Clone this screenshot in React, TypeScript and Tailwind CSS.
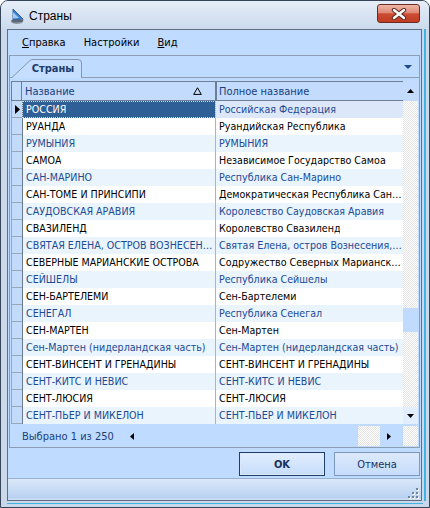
import React from 'react';

type Row = { name: string; full: string };

const rows: Row[] = [
  { name: 'РОССИЯ', full: 'Российская Федерация' },
  { name: 'РУАНДА', full: 'Руандийская Республика' },
  { name: 'РУМЫНИЯ', full: 'РУМЫНИЯ' },
  { name: 'САМОА', full: 'Независимое Государство Самоа' },
  { name: 'САН-МАРИНО', full: 'Республика Сан-Марино' },
  { name: 'САН-ТОМЕ И ПРИНСИПИ', full: 'Демократическая Республика Сан-Томе и Принсипи' },
  { name: 'САУДОВСКАЯ АРАВИЯ', full: 'Королевство Саудовская Аравия' },
  { name: 'СВАЗИЛЕНД', full: 'Королевство Свазиленд' },
  { name: 'СВЯТАЯ ЕЛЕНА, ОСТРОВ ВОЗНЕСЕНИЯ, ТРИСТАН-ДА-КУНЬЯ', full: 'Святая Елена, остров Вознесения, Тристан-да-Кунья' },
  { name: 'СЕВЕРНЫЕ МАРИАНСКИЕ ОСТРОВА', full: 'Содружество Северных Марианских островов' },
  { name: 'СЕЙШЕЛЫ', full: 'Республика Сейшелы' },
  { name: 'СЕН-БАРТЕЛЕМИ', full: 'Сен-Бартелеми' },
  { name: 'СЕНЕГАЛ', full: 'Республика Сенегал' },
  { name: 'СЕН-МАРТЕН', full: 'Сен-Мартен' },
  { name: 'Сен-Мартен (нидерландская часть)', full: 'Сен-Мартен (нидерландская часть)' },
  { name: 'СЕНТ-ВИНСЕНТ И ГРЕНАДИНЫ', full: 'СЕНТ-ВИНСЕНТ И ГРЕНАДИНЫ' },
  { name: 'СЕНТ-КИТС И НЕВИС', full: 'СЕНТ-КИТС И НЕВИС' },
  { name: 'СЕНТ-ЛЮСИЯ', full: 'СЕНТ-ЛЮСИЯ' },
  { name: 'СЕНТ-ПЬЕР И МИКЕЛОН', full: 'СЕНТ-ПЬЕР И МИКЕЛОН' },
];

function AppIcon() {
  return (
    <svg width="15" height="17" viewBox="0 0 15 17">
      <ellipse cx="7" cy="13.5" rx="6" ry="2.5" fill="#8d96a3" />
      <path d="M3 1 L13 11 L3 12 Z" fill="#3b7fd0" stroke="#1c4f95" strokeWidth="0.8" />
      <path d="M3 4 L9 10 L3 10.5 Z" fill="#9fc8f2" />
      <path d="M1 12 L14 11.5 L12 14 L3 14.5 Z" fill="#5d6673" />
    </svg>
  );
}

function CloseButton() {
  return (
    <div className="w-[43px] h-[19px] mt-[3px] self-start rounded-[3px] border border-[#6b2a1f] bg-[linear-gradient(#eeb6a8_0%,#e08a76_45%,#cc4c34_52%,#c23d24_100%)] flex items-center justify-center">
      <svg width="16" height="12" viewBox="0 0 16 12">
        <path d="M3 2 L13 10 M13 2 L3 10" stroke="#5b2a22" strokeWidth="4.4" strokeLinecap="round" />
        <path d="M3 2 L13 10 M13 2 L3 10" stroke="#ffffff" strokeWidth="2.4" strokeLinecap="round" />
      </svg>
    </div>
  );
}

function Tri({ dir, color = '#000', w = 7, h = 4 }: { dir: 'up' | 'down' | 'left' | 'right'; color?: string; w?: number; h?: number }) {
  const pts = {
    up: `0,${h} ${w / 2},0 ${w},${h}`,
    down: `0,0 ${w},0 ${w / 2},${h}`,
    left: `${w},0 ${w},${h} 0,${h / 2}`,
    right: `0,0 0,${h} ${w},${h / 2}`,
  }[dir];
  return (
    <svg width={w} height={h} viewBox={`0 0 ${w} ${h}`}>
      <polygon points={pts} fill={color} />
    </svg>
  );
}

const checker =
  'bg-[repeating-conic-gradient(#ffffff_0%_25%,#e3e3e3_0%_50%)] bg-[length:2px_2px]';

function GridRow({ row, index }: { row: Row; index: number }) {
  const alt = index % 2 === 0;
  const selected = index === 0;
  const text = alt ? 'text-[#1c4a94]' : 'text-black';
  const bg = alt ? 'bg-[#e9f4fd]' : 'bg-white';
  return (
    <div className="flex h-[17px]">
      <div className="w-[11px] border-l border-b border-[#98a7ba] bg-[#c2dbfa] flex items-center justify-center">
        {selected && <Tri dir="right" w={5} h={9} />}
      </div>
      <div
        className={`w-[194px] border-l border-l-[#6b7b8f] border-r border-r-[#a9b4c2] flex items-center pl-[3px] overflow-hidden ${
          selected ? 'bg-[#2f5f97] text-white outline-1 outline-dotted outline-[#d0dcea] -outline-offset-1' : `${bg} ${text}`
        }`}
      >
        <span className="truncate">{row.name}</span>
      </div>
      <div
        className={`w-[187px] flex items-center pl-[3px] overflow-hidden ${selected ? 'bg-[#dce8fa] text-[#1c4a94]' : `${bg} ${text}`}`}
      >
        <span className="truncate">{row.full}</span>
      </div>
    </div>
  );
}

export default function App() {
  return (
    <div className="w-[430px] h-[508px] flex flex-col bg-[#cad8ea] border border-[#36445a] rounded-t-[8px] overflow-hidden font-['DejaVu_Sans_Condensed','Liberation_Sans',Arial,sans-serif] text-[10.6px] leading-[13px] select-none">
      {/* title bar */}
      <div className="h-[28px] shrink-0 flex items-start pl-[9px] pr-[9px] bg-[linear-gradient(#e6eef8,#cbdaec)]">
        <div className="mt-[7px]">
          <AppIcon />
        </div>
        <span className="ml-[4px] mt-[8px] font-['Liberation_Sans',Arial,sans-serif] text-[12px] leading-[14px] text-black">Страны</span>
        <div className="ml-auto">
          <CloseButton />
        </div>
      </div>

      <div className="flex-1 flex pl-[6px] min-h-0">
        {/* client */}
        <div className="w-[415px] flex flex-col border border-[#5f6e82] bg-[#bfdbff]">
          {/* menu */}
          <div className="h-[25px] shrink-0 flex items-center gap-[18px] pl-[14px] text-[11px] text-black">
            <span>
              <span className="underline">С</span>правка
            </span>
            <span>Настройки</span>
            <span>
              <span className="underline">В</span>ид
            </span>
          </div>

          {/* tab + grid panel */}
          <div className="mx-[1px] flex flex-col border border-[#8d9db3]">
            <div className="h-[22px] shrink-0 flex items-end border-b border-[#8d9db3] pr-[7px]">
              <div className="relative w-[72px] h-[19px] ml-[1px] -mb-[1px] flex items-center justify-center pl-[18px] pr-[6px]">
                <svg className="absolute inset-0" width="72" height="19" viewBox="0 0 72 19">
                  <path d="M0.5 19 L19 1.5 Q20 0.5 22 0.5 L67 0.5 Q70.5 0.5 70.5 4 L70.5 19" fill="#c6deff" stroke="#8596ad" />
                </svg>
                <span className="relative font-bold text-[11px] text-[#1e3b6b]">Страны</span>
              </div>
              <div className="ml-auto mb-[8px]">
                <Tri dir="down" color="#1e4a8c" w={8} h={4} />
              </div>
            </div>

            {/* grid */}
            <div className="pt-[3px] px-[1px] bg-[#bfdbff]">
              <div className="flex">
                <div className="flex flex-col">
                  {/* header */}
                  <div className="flex h-[20px] text-[11px]">
                    <div className="w-[11px] border border-[#6f7f93] bg-[#c4dcfb]" />
                    <div className="w-[194px] border-t border-b border-r border-[#6f7f93] bg-[#c3dbfd] flex items-center pl-[3px] pr-[13px] text-[#16407e]">
                      <span>Название</span>
                      <svg className="ml-auto" width="9" height="8" viewBox="0 0 9 8">
                        <path d="M4.5 0.8 L8.3 7.4 L0.7 7.4 Z" fill="none" stroke="#000" strokeWidth="1" />
                      </svg>
                    </div>
                    <div className="w-[187px] border-t border-b border-l border-[#6f7f93] bg-[#c3dbfd] flex items-center pl-[2px] text-[#16407e]">
                      Полное название
                    </div>
                  </div>
                  {rows.map((r, i) => (
                    <GridRow key={r.name} row={r} index={i} />
                  ))}
                </div>

                {/* vertical scrollbar */}
                <div className="w-[15px] flex flex-col">
                  <div className="h-[20px] bg-[#c3dbfd] flex items-center justify-center">
                    <Tri dir="up" />
                  </div>
                  <div className={`h-[207px] ${checker}`} />
                  <div className="h-[24px] bg-[#c0dbff]" />
                  <div className={`h-[75px] ${checker}`} />
                  <div className="h-[17px] bg-[#e2eefd] flex items-center justify-center">
                    <Tri dir="down" />
                  </div>
                </div>
              </div>

              {/* horizontal scrollbar + status */}
              <div className="h-[23px] pt-[2px] flex">
                <div className="h-[20px] w-[392px] flex items-center bg-[#bfdbff]">
                  <span className="pl-[11px] w-[117px] text-[11px] text-[#1c3f7a]">Выбрано 1 из 250</span>
                  <div className="w-[8px] flex justify-center">
                    <Tri dir="left" w={4} h={7} />
                  </div>
                  <div className="w-[222px] h-full" />
                  <div className={`w-[22px] h-full ${checker}`} />
                  <div className="w-[18px] h-full flex items-center justify-center">
                    <Tri dir="right" w={4} h={7} />
                  </div>
                </div>
                <div className={`w-[15px] h-[20px] ${checker}`} />
              </div>
            </div>
          </div>

          {/* buttons */}
          <div className="h-[30px] shrink-0 flex justify-end gap-[9px] pr-[1px] pt-[4px] text-[11px]">
            <button className="w-[86px] h-[24px] border border-[#1f3d6d] bg-[linear-gradient(#e3eefd,#c4dcfb)] shadow-[inset_0_0_0_1px_#dbe8fb] font-bold text-[#15325f]">
              OK
            </button>
            <button className="w-[86px] h-[24px] border border-[#7d98bd] bg-[linear-gradient(#dce9fc,#c6ddfb)] text-[#15325f]">
              Отмена
            </button>
          </div>

          {/* status bar */}
          <div className="flex-1 border-t border-[#99b1d0] bg-[linear-gradient(#dbe8fa_0%,#c8dcf6_50%,#b9d1f1_90%,#d3e3f8_100%)] flex items-end justify-end pr-[2px] pb-[1px]">
            <svg width="11" height="11" viewBox="0 0 11 11">
              {[
                [8, 0],
                [8, 4],
                [4, 4],
                [8, 8],
                [4, 8],
                [0, 8],
              ].map(([x, y]) => (
                <g key={`${x}-${y}`}>
                  <rect x={x + 1} y={y + 1} width="2" height="2" fill="#ffffff" />
                  <rect x={x} y={y} width="2" height="2" fill="#6f85a6" />
                </g>
              ))}
            </svg>
          </div>
        </div>

        {/* right frame */}
        <div className="w-[7px] flex pl-[2px]">
          <div className="w-[2px] bg-[#3fb3e3]" />
        </div>
      </div>

      {/* bottom frame */}
      <div className="h-[6px] shrink-0 flex flex-col pt-[2px] px-[6px]">
        <div className="h-[1px] bg-[#3fb3e3]" />
      </div>
    </div>
  );
}
